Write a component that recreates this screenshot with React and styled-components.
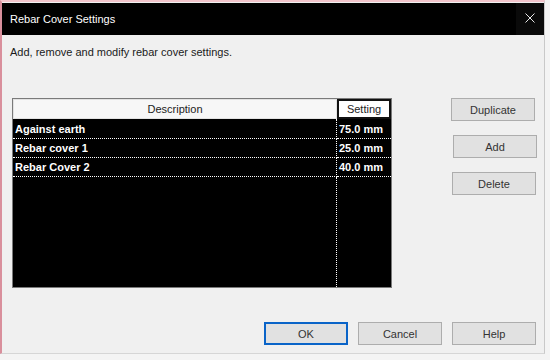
import React from 'react';
import styled, { createGlobalStyle } from 'styled-components';

const GlobalStyle = createGlobalStyle`
  html, body {
    margin: 0;
    padding: 0;
    background: #ffffff;
    font-family: "Liberation Sans", "Noto Sans", sans-serif;
  }
`;

const Page = styled.div`
  width: 550px;
  height: 360px;
  overflow: hidden;
  background: #f4f4f4;
`;

const Window = styled.div`
  width: 545px;
  height: 354px;
  border-top: 2px solid #f2c4cb;
  border-left: 2px solid #d98f9c;
  border-right: 1px solid #c9c9c9;
  border-bottom: 1px solid #d6d6d6;
  background: #f0f0f0;
  display: flex;
  flex-direction: column;
  box-sizing: border-box;
`;

const TitleBar = styled.div`
  height: 32px;
  margin-top: 1px;
  background: #000;
  color: #fff;
  display: flex;
  align-items: center;
  justify-content: space-between;
  padding-left: 8px;
  font-size: 11px;
`;

const Close = styled.div`
  width: 28px;
  height: 32px;
  display: flex;
  align-items: center;
  justify-content: center;
  padding-bottom: 2px;
  box-sizing: border-box;
  background: #0a0a0a;
`;

const Hint = styled.div`
  font-size: 11px;
  color: #1a1a1a;
  padding: 11px 0 0 8px;
  height: 21px;
`;

const Main = styled.div`
  display: flex;
  margin-top: 31px;
  padding-left: 10px;
`;

const Table = styled.div`
  width: 380px;
  height: 190px;
  border: 1px solid #7a7a7a;
  box-sizing: border-box;
  display: grid;
  grid-template-columns: 324px 1fr;
  grid-template-rows: 20px 20px 19px 19px 1fr;
  background: #000;
`;

const HeadCell = styled.div`
  background: ${p => (p.$active ? '#ffffff' : '#f7f7f7')};
  border: ${p => (p.$active ? '2px solid #111' : '1px solid #e2e2e2')};
  box-sizing: border-box;
  font-size: 11px;
  color: #222;
  display: flex;
  align-items: center;
  justify-content: center;
`;

const Cell = styled.div`
  color: #fff;
  font-size: 11px;
  font-weight: 700;
  display: flex;
  align-items: center;
  padding-left: 2px;
  border-bottom: 1px dotted #fff;
  border-right: ${p => (p.$first ? '1px dotted #fff' : 'none')};
`;

const Filler = styled.div`
  border-right: ${p => (p.$first ? '1px dotted #fff' : 'none')};
`;

const Side = styled.div`
  display: flex;
  flex-direction: column;
  gap: 14px;
  margin-left: 59px;
`;

const Button = styled.button`
  width: 84px;
  height: 23px;
  background: #e1e1e1;
  border: 1px solid ${p => (p.$primary ? '#0a64c8' : '#adadad')};
  box-shadow: ${p => (p.$primary ? 'inset 0 0 0 1px #0a64c8' : 'none')};
  font-family: "Liberation Sans", "Noto Sans", sans-serif;
  font-size: 11px;
  color: #333;
  padding: 0;
  margin-left: ${p => p.$shift || 0}px;
`;

const Footer = styled.div`
  display: flex;
  justify-content: flex-end;
  gap: 10px;
  margin-top: auto;
  padding: 0 8px 8px 0;
`;

const rows = [
  ['Against earth', '75.0 mm'],
  ['Rebar cover 1', '25.0 mm'],
  ['Rebar Cover 2', '40.0 mm'],
];

export default function App() {
  return (
    <Page>
      <GlobalStyle />
      <Window>
        <TitleBar>
          <span>Rebar Cover Settings</span>
          <Close>
            <svg width="10" height="10" viewBox="0 0 10 10">
              <path d="M0.5 0.5L9.5 9.5M9.5 0.5L0.5 9.5" stroke="#e8e8e8" strokeWidth="1" />
            </svg>
          </Close>
        </TitleBar>
        <Hint>Add, remove and modify rebar cover settings.</Hint>
        <Main>
          <Table>
            <HeadCell>Description</HeadCell>
            <HeadCell $active>Setting</HeadCell>
            {rows.map(([d, s]) => (
              <React.Fragment key={d}>
                <Cell $first>{d}</Cell>
                <Cell>{s}</Cell>
              </React.Fragment>
            ))}
            <Filler $first />
            <Filler />
          </Table>
          <Side>
            <Button>Duplicate</Button>
            <Button $shift={2}>Add</Button>
            <Button $shift={1}>Delete</Button>
          </Side>
        </Main>
        <Footer>
          <Button $primary>OK</Button>
          <Button>Cancel</Button>
          <Button>Help</Button>
        </Footer>
      </Window>
    </Page>
  );
}
